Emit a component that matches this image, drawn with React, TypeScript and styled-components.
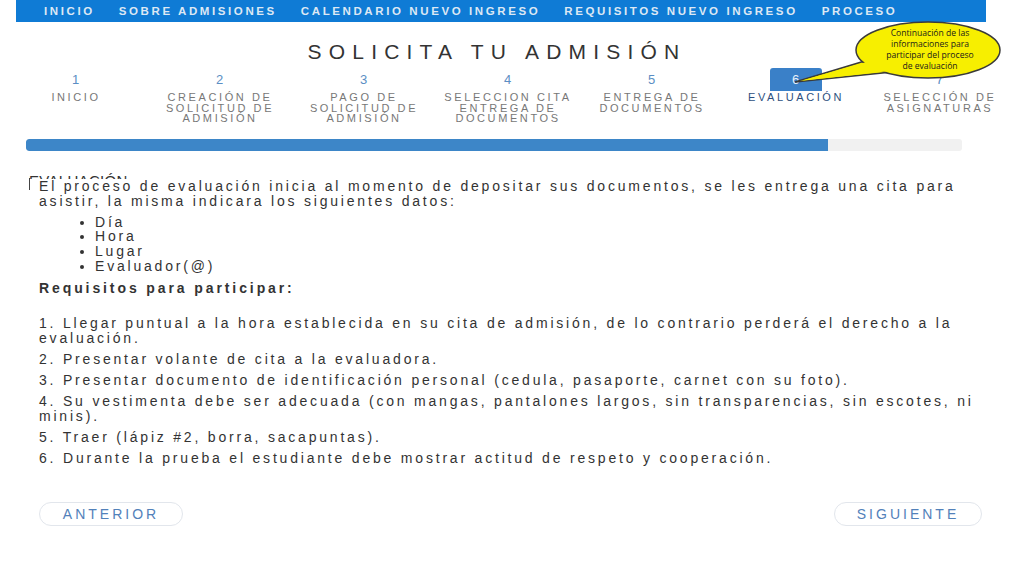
import React from 'react';
import styled, { createGlobalStyle } from 'styled-components';

const GlobalStyle = createGlobalStyle`
  html, body {
    margin: 0;
    padding: 0;
    background: #ffffff;
  }
  body {
    font-family: "Liberation Sans", Arial, sans-serif;
    color: #333;
  }
`;

const Page = styled.div`
  position: relative;
  width: 1024px;
  height: 565px;
  overflow: hidden;
  background: #fff;
`;

const NavBar = styled.nav`
  margin: 0 38px 0 16px;
  height: 22px;
  background: #0f7bd5;
  display: flex;
  align-items: center;
  padding-left: 28px;
  gap: 24px;
`;

const NavItem = styled.a`
  color: #dde8f4;
  font-size: 11.5px;
  font-weight: bold;
  letter-spacing: 2.6px;
  text-decoration: none;
  white-space: nowrap;
`;

const Title = styled.h1`
  margin: 18px 0 0;
  padding-right: 30px;
  text-align: center;
  font-size: 21px;
  line-height: 24px;
  font-weight: normal;
  letter-spacing: 7.2px;
  color: #333;
`;

const Steps = styled.div`
  display: grid;
  grid-template-columns: repeat(7, 144px);
  margin: 4px 0 0 4px;
`;

const Step = styled.div`
  display: flex;
  flex-direction: column;
  align-items: center;
`;

const StepNumber = styled.div<{ $active?: boolean }>`
  width: 52px;
  height: 23px;
  display: flex;
  align-items: center;
  justify-content: center;
  font-size: 13px;
  letter-spacing: 1px;
  color: ${(p) => (p.$active ? '#e8f0fa' : '#5b8ec4')};
  background: ${(p) => (p.$active ? '#3a80c8' : 'transparent')};
  border-radius: 3px 3px 0 0;
`;

const StepLabel = styled.div<{ $active?: boolean }>`
  margin-top: 1px;
  text-align: center;
  font-size: 11px;
  line-height: 10.5px;
  letter-spacing: 2.6px;
  white-space: nowrap;
  color: ${(p) => (p.$active ? '#2d4f7e' : '#777')};
  text-transform: uppercase;
`;

const Progress = styled.div`
  margin: 15px 62px 0 26px;
  height: 12px;
  background: #f1f1f1;
  border-radius: 3px;
  overflow: hidden;
`;

const ProgressFill = styled.div`
  height: 100%;
  background: #3d86c8;
  border-radius: 3px 0 0 3px;
`;

const Section = styled.section`
  padding: 0 39px 0 29px;
`;

const SectionTitle = styled.h2`
  margin: 21px 0 0;
  font-size: 15px;
  line-height: 18px;
  font-weight: normal;
  letter-spacing: 0.3px;
  color: #333;
  height: 18px;
`;

const Body = styled.div`
  position: relative;
  margin-top: -11px;
  background: #fff;
  padding-left: 10px;
  font-size: 14px;
  line-height: 15px;
  letter-spacing: 2.8px;
  color: #333;

  &::before {
    content: '';
    position: absolute;
    left: 0;
    top: -1px;
    width: 1px;
    height: 12px;
    background: #444;
  }
`;

const BodyText = styled.p`
  margin: 0;
`;

const Bullets = styled.ul`
  margin: 6px 0 0;
  padding-left: 56px;
  list-style: disc;
  line-height: 14.7px;
`;

const Strong = styled.p`
  margin: 8px 0 0;
  font-weight: bold;
  letter-spacing: 2.9px;
`;

const Requirements = styled.div`
  margin-top: 20px;
`;

const Requirement = styled.p`
  margin: 0 0 6px;
`;

const Footer = styled.div`
  display: flex;
  justify-content: space-between;
  padding: 0 42px 0 39px;
  margin-top: 36px;
`;

const PagerButton = styled.button<{ $w: number }>`
  width: ${(p) => p.$w}px;
  height: 24px;
  border: 1px solid #e2e6ec;
  border-radius: 12px;
  background: #fff;
  color: #5281ba;
  font-family: "Liberation Sans", Arial, sans-serif;
  font-size: 14px;
  letter-spacing: 3px;
  padding: 0;
  cursor: pointer;
`;

const Callout = styled.div`
  position: absolute;
  left: 780px;
  top: 18px;
  width: 230px;
  height: 75px;
`;

const CalloutText = styled.div`
  position: absolute;
  left: 88px;
  top: 10px;
  width: 124px;
  text-align: center;
  font-family: "Open Sans", "Liberation Sans", sans-serif;
  font-size: 8.6px;
  line-height: 11px;
  color: #1a1a1a;
`;

const steps = [
  { n: '1', label: ['Inicio'] },
  { n: '2', label: ['Creación de', 'solicitud de', 'admisión'] },
  { n: '3', label: ['Pago de', 'solicitud de', 'admisión'] },
  { n: '4', label: ['Seleccion cita', 'entrega de', 'documentos'] },
  { n: '5', label: ['Entrega de', 'documentos'] },
  { n: '6', label: ['Evaluación'], active: true },
  { n: '7', label: ['Selección de', 'asignaturas'] },
];

const requirements = [
  '1. Llegar puntual a la hora establecida en su cita de admisión, de lo contrario perderá el derecho a la evaluación.',
  '2. Presentar volante de cita a la evaluadora.',
  '3. Presentar documento de identificación personal (cedula, pasaporte, carnet con su foto).',
  '4. Su vestimenta debe ser adecuada (con mangas, pantalones largos, sin transparencias, sin escotes, ni minis).',
  '5. Traer (lápiz #2, borra, sacapuntas).',
  '6. Durante la prueba el estudiante debe mostrar actitud de respeto y cooperación.',
];

export default function App() {
  return (
    <Page>
      <GlobalStyle />
      <NavBar>
        <NavItem>INICIO</NavItem>
        <NavItem>SOBRE ADMISIONES</NavItem>
        <NavItem>CALENDARIO NUEVO INGRESO</NavItem>
        <NavItem>REQUISITOS NUEVO INGRESO</NavItem>
        <NavItem>PROCESO</NavItem>
      </NavBar>

      <Title>SOLICITA TU ADMISIÓN</Title>

      <Steps>
        {steps.map((s) => (
          <Step key={s.n}>
            <StepNumber $active={s.active}>{s.n}</StepNumber>
            <StepLabel $active={s.active}>
              {s.label.map((l) => (
                <div key={l}>{l}</div>
              ))}
            </StepLabel>
          </Step>
        ))}
      </Steps>

      <Progress>
        <ProgressFill style={{ width: `${((828 - 26) / 936) * 100}%` }} />
      </Progress>

      <Section>
        <SectionTitle>EVALUACIÓN</SectionTitle>
        <Body>
          <BodyText>
            El proceso de evaluación inicia al momento de depositar sus documentos, se les entrega una cita para
            asistir, la misma indicara los siguientes datos:
          </BodyText>
          <Bullets>
            <li>Día</li>
            <li>Hora</li>
            <li>Lugar</li>
            <li>Evaluador(@)</li>
          </Bullets>
          <Strong>Requisitos para participar:</Strong>
          <Requirements>
            {requirements.map((r) => (
              <Requirement key={r}>{r}</Requirement>
            ))}
          </Requirements>
        </Body>
      </Section>

      <Footer>
        <PagerButton $w={144}>ANTERIOR</PagerButton>
        <PagerButton $w={148}>SIGUIENTE</PagerButton>
      </Footer>

      <Callout>
        <svg width="230" height="75" viewBox="0 0 230 75">
          <polygon points="88,42 15,64 112,54" fill="#f7ef00" stroke="#3a3a3a" strokeWidth="1.5" />
          <ellipse cx="148" cy="32" rx="72" ry="28" fill="#f7ef00" stroke="#3a3a3a" strokeWidth="1.5" />
          <polygon points="90,43 20,63 110,53" fill="#f7ef00" />
        </svg>
        <CalloutText>
          Continuación de las
          <br />
          informaciones para
          <br />
          participar del proceso
          <br />
          de evaluación
        </CalloutText>
      </Callout>
    </Page>
  );
}
